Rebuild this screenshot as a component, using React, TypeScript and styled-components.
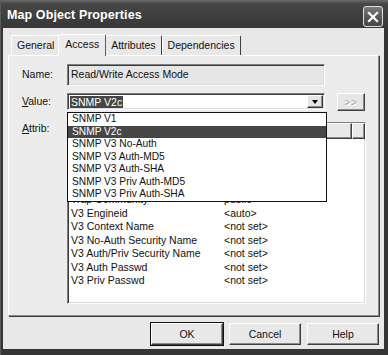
import React from 'react';
import styled, { createGlobalStyle } from 'styled-components';

const GlobalStyle = createGlobalStyle`
  html, body { margin: 0; padding: 0; background: #3a3a3a; }
  body { font-family: "Liberation Sans", Arial, sans-serif; }
`;

const Window = styled.div`
  width: 388px;
  height: 355px;
  box-sizing: border-box;
  display: flex;
  flex-direction: column;
  background: #363636;
  border-left: 1px solid #5a5a5a;
  overflow: hidden;
`;

const TitleBar = styled.div`
  height: 28px;
  flex: 0 0 28px;
  display: flex;
  align-items: center;
  justify-content: space-between;
  padding: 0 5px 0 6px;
  background: linear-gradient(#6a6a6a 0%, #464646 14%, #3e3e3e 60%, #383838 100%);
`;

const Title = styled.span`
  color: #fff;
  font-weight: bold;
  font-size: 12.5px;
  letter-spacing: 0.1px;
  margin-top: 1px;
`;

const CloseButton = styled.div`
  width: 20px;
  height: 21px;
  box-sizing: border-box;
  border: 1px solid #e0e0e0;
  border-radius: 3px;
  background: linear-gradient(#7a7a7a, #555 60%, #4a4a4a);
  display: flex;
  align-items: center;
  justify-content: center;
  margin-top: 5px;
`;

const Body = styled.div`
  flex: 1;
  margin: 0 4px 6px 2px;
  background: #e8e8e8;
  padding: 5px 5px 4px 5px;
  display: flex;
  flex-direction: column;
  font-size: 10.5px;
  color: #111;
`;

const TabStrip = styled.div`
  height: 22px;
  display: flex;
  align-items: flex-end;
  padding-left: 3px;
`;

const Tab = styled.div<{ $active?: boolean }>`
  position: relative;
  height: ${p => (p.$active ? 22 : 20)}px;
  box-sizing: border-box;
  padding: ${p => (p.$active ? '0 6px 3px' : '0 5px 1px')};
  margin: ${p => (p.$active ? '0 -1px -1px -2px' : '0')};
  display: flex;
  align-items: center;
  background: ${p => (p.$active ? '#ececec' : '#e8e8e8')};
  border-top: 1px solid #ffffff;
  border-left: 1px solid #ffffff;
  border-right: 1px solid ${p => (p.$active ? '#5a5a5a' : '#3e3e3e')};
  border-radius: 2px 2px 0 0;
  z-index: ${p => (p.$active ? 2 : 1)};
  white-space: nowrap;
`;

const Panel = styled.div`
  height: 261px;
  box-sizing: border-box;
  background: #ececec;
  border-top: 1px solid #ffffff;
  border-left: 1px solid #ffffff;
  border-right: 1px solid #8a8a8a;
  border-bottom: 1px solid #8a8a8a;
  box-shadow: 1px 1px 0 #3e3e3e;
  padding: 8px 0 0 13px;
  display: grid;
  grid-template-columns: 45px auto;
  align-content: start;
`;

const Label = styled.div<{ $top: number; $mt?: number }>`
  padding-top: ${p => p.$top}px;
  margin-top: ${p => p.$mt ?? 0}px;
  white-space: nowrap;
`;

const sunken = `
  border-top: 1px solid #7e7e7e;
  border-left: 1px solid #7e7e7e;
  border-right: 1px solid #ffffff;
  border-bottom: 1px solid #ffffff;
  box-shadow: inset 1px 1px 0 #3c3c3c, inset -1px -1px 0 #dcdcdc;
`;

const ReadOnlyField = styled.div`
  width: 258px;
  height: 22px;
  box-sizing: border-box;
  ${sunken}
  background: #e6e6e6;
  padding: 3px 0 0 3px;
`;

const ValueRow = styled.div`
  display: flex;
  gap: 12px;
  margin-top: 7px;
`;

const Combo = styled.div`
  position: relative;
  width: 258px;
  height: 17px;
  box-sizing: border-box;
  ${sunken}
  background: #fff;
  display: flex;
  align-items: center;
  padding-left: 2px;
`;

const Selected = styled.span`
  background: #464646;
  color: #fff;
  padding: 0 1px;
  line-height: 12px;
`;

const raised = `
  border-top: 1px solid #ffffff;
  border-left: 1px solid #ffffff;
  border-right: 1px solid #3e3e3e;
  border-bottom: 1px solid #3e3e3e;
  box-shadow: inset -1px -1px 0 #8a8a8a;
`;

const ArrowButton = styled.div`
  position: absolute;
  right: 1px;
  top: 1px;
  bottom: 1px;
  width: 16px;
  box-sizing: border-box;
  background: #e6e6e6;
  ${raised}
  display: flex;
  align-items: center;
  justify-content: center;
`;

const Triangle = styled.div`
  width: 0;
  height: 0;
  border-left: 3.5px solid transparent;
  border-right: 3.5px solid transparent;
  border-top: 4px solid #000;
`;

const MoreButton = styled.div`
  width: 28px;
  height: 18px;
  box-sizing: border-box;
  background: #e6e6e6;
  ${raised}
  color: #a8a8a8;
  text-shadow: 1px 1px 0 #fff;
  display: flex;
  align-items: center;
  justify-content: center;
  font-size: 10px;
  letter-spacing: 1px;
`;

const DropList = styled.div`
  position: absolute;
  top: 18px;
  left: -1px;
  width: 260px;
  box-sizing: border-box;
  border: 1px solid #111;
  background: #fff;
  z-index: 5;
  font-size: 10.2px;
`;

const DropItem = styled.div<{ $selected?: boolean }>`
  height: 12.5px;
  line-height: 12.5px;
  padding-left: 4px;
  background: ${p => (p.$selected ? '#464646' : 'transparent')};
  color: ${p => (p.$selected ? '#fff' : '#111')};
  white-space: nowrap;
`;

const ListView = styled.div`
  width: 299px;
  height: 182px;
  box-sizing: border-box;
  margin-top: 11px;
  ${sunken}
  background: #fff;
  overflow: hidden;
`;

const HeaderRow = styled.div`
  display: flex;
  height: 16px;
`;

const HeaderCell = styled.div<{ $w?: number }>`
  ${p => (p.$w ? `width: ${p.$w}px;` : 'flex: 1;')}
  box-sizing: border-box;
  background: #e8e8e8;
  ${raised}
  padding-left: 5px;
  line-height: 14px;
  white-space: nowrap;
`;

const Row = styled.div`
  display: flex;
  height: 13.5px;
  line-height: 13.5px;
  white-space: nowrap;
`;

const Cell = styled.div<{ $w?: number }>`
  ${p => (p.$w ? `width: ${p.$w}px;` : 'flex: 1;')}
  padding-left: 3px;
  box-sizing: border-box;
`;

const ButtonRow = styled.div`
  display: flex;
  justify-content: flex-end;
  gap: 6px;
  margin-top: 7px;
`;

const Button = styled.div<{ $default?: boolean }>`
  width: 72px;
  height: 22px;
  box-sizing: border-box;
  background: #e8e8e8;
  border-top: 1px solid #ffffff;
  border-left: 1px solid #ffffff;
  border-right: 1px solid #3e3e3e;
  border-bottom: 1px solid #3e3e3e;
  box-shadow: inset -1px -1px 0 #8a8a8a;
  ${p => (p.$default ? 'outline: 1px solid #111;' : '')}
  display: flex;
  align-items: center;
  justify-content: center;
`;

const options = [
  'SNMP V1',
  'SNMP V2c',
  'SNMP V3 No-Auth',
  'SNMP V3 Auth-MD5',
  'SNMP V3 Auth-SHA',
  'SNMP V3 Priv Auth-MD5',
  'SNMP V3 Priv Auth-SHA',
];

// first rows sit under the open drop-down, so they stay blank
const attributes: [string, string][] = [
  ['', ''],
  ['', ''],
  ['', ''],
  ['', ''],
  ['Trap Community', 'public'],
  ['V3 Engineid', '<auto>'],
  ['V3 Context Name', '<not set>'],
  ['V3 No-Auth Security Name', '<not set>'],
  ['V3 Auth/Priv Security Name', '<not set>'],
  ['V3 Auth Passwd', '<not set>'],
  ['V3 Priv Passwd', '<not set>'],
];

export default function App() {
  return (
    <>
      <GlobalStyle />
      <Window>
        <TitleBar>
          <Title>Map Object Properties</Title>
          <CloseButton>
            <svg width="12" height="12" viewBox="0 0 12 12">
              <path d="M2 2 L10 10 M10 2 L2 10" stroke="#fff" strokeWidth="2.2" strokeLinecap="square" />
            </svg>
          </CloseButton>
        </TitleBar>
        <Body>
          <TabStrip>
            <Tab>General</Tab>
            <Tab $active>Access</Tab>
            <Tab>Attributes</Tab>
            <Tab>Dependencies</Tab>
          </TabStrip>
          <Panel>
            <Label $top={4}>Name:</Label>
            <ReadOnlyField>Read/Write Access Mode</ReadOnlyField>

            <Label $top={2} $mt={7}>
              <u>V</u>alue:
            </Label>
            <ValueRow>
              <Combo>
                <Selected>SNMP V2c</Selected>
                <ArrowButton>
                  <Triangle />
                </ArrowButton>
                <DropList>
                  {options.map(o => (
                    <DropItem key={o} $selected={o === 'SNMP V2c'}>
                      {o}
                    </DropItem>
                  ))}
                </DropList>
              </Combo>
              <MoreButton>&gt;&gt;</MoreButton>
            </ValueRow>

            <Label $top={0} $mt={11}>
              <u>A</u>ttrib:
            </Label>
            <ListView>
              <HeaderRow>
                <HeaderCell $w={151} />
                <HeaderCell $w={133} />
                <HeaderCell />
              </HeaderRow>
              {attributes.map(([k, v], i) => (
                <Row key={i}>
                  <Cell $w={153}>{k}</Cell>
                  <Cell>{v}</Cell>
                </Row>
              ))}
            </ListView>
          </Panel>
          <ButtonRow>
            <Button $default>OK</Button>
            <Button>Cancel</Button>
            <Button>Help</Button>
          </ButtonRow>
        </Body>
      </Window>
    </>
  );
}
